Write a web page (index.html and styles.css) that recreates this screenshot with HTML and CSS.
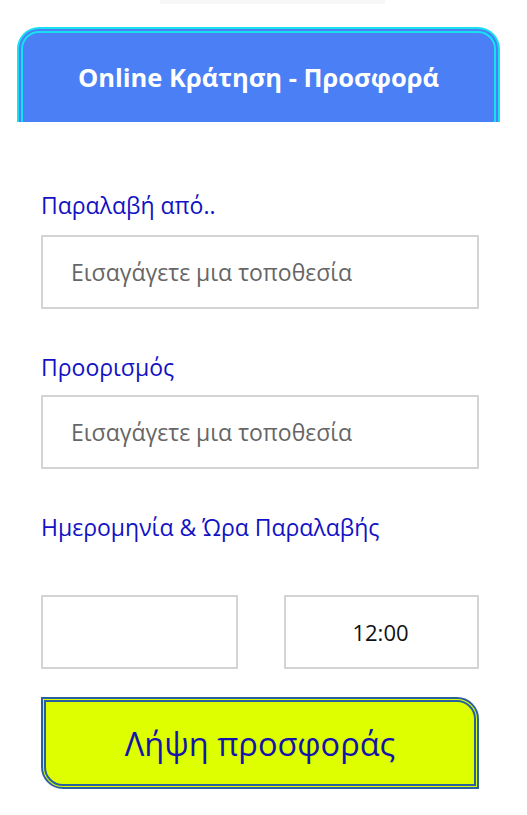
FILE: index.html
```html
<!DOCTYPE html>
<html lang="el">
<head>
<meta charset="utf-8">
<title>Online Κράτηση</title>
<link rel="stylesheet" href="styles.css">
</head>
<body>
<div class="topbar"></div>
<div class="widget">
  <div class="header">Online Κράτηση - Προσφορά</div>
  <form class="form">
    <label class="label">Παραλαβή από..</label>
    <div class="field"><span class="ph">Εισαγάγετε μια τοποθεσία</span></div>
    <label class="label l2">Προορισμός</label>
    <div class="field"><span class="ph">Εισαγάγετε μια τοποθεσία</span></div>
    <label class="label l3">Ημερομηνία &amp; Ώρα Παραλαβής</label>
    <div class="row">
      <div class="field small"></div>
      <div class="field small time">12:00</div>
    </div>
    <div class="btn">Λήψη προσφοράς</div>
  </form>
</div>
</body>
</html>
```
FILE: styles.css
```css
html, body {
  margin: 0;
  padding: 0;
  background: #ffffff;
}
body {
  width: 527px;
  height: 815px;
  overflow: hidden;
  font-family: "Open Sans", "Noto Sans", sans-serif;
}
.topbar {
  width: 225px;
  height: 4px;
  margin-left: 160px;
  background: #f7f7f7;
}
.widget {
  margin: 23px 0 0 17px;
  width: 483px;
}
.header {
  height: 95px;
  box-sizing: border-box;
  border: 6px double #18e0f0;
  border-bottom: none;
  border-radius: 22px 22px 0 0;
  background: #4a7ff5;
  color: #ffffff;
  font-family: "Open Sans", sans-serif;
  font-weight: 700;
  font-size: 25.5px;
  display: flex;
  align-items: center;
  justify-content: center;
  padding-bottom: 2px;
}
.form {
  padding: 68px 21px 0 24px;
  display: flex;
  flex-direction: column;
}
.label {
  display: block;
  color: #1212c4;
  font-size: 23px;
  line-height: 30px;
  height: 30px;
  margin-bottom: 15px;
}
.l2 { margin-top: 43px; margin-bottom: 13px; }
.l3 { margin-top: 43px; margin-bottom: 53px; }
.field {
  box-sizing: border-box;
  height: 74px;
  border: 2px solid #d4d4d4;
  background: #fff;
  display: flex;
  align-items: center;
  padding-left: 28px;
}
.ph {
  color: #666666;
  font-size: 23px;
}
.row {
  display: flex;
  justify-content: space-between;
}
.small {
  width: 197px;
  padding: 0;
}
.small.time {
  width: 195px;
  justify-content: center;
  color: #111;
  font-size: 22px;
  padding-right: 2px;
}
.btn {
  margin-top: 28px;
  height: 92px;
  box-sizing: border-box;
  border: 5px double #2a5fa0;
  border-radius: 0 22px 0 22px;
  background: #ddff00;
  color: #1414a8;
  font-size: 32.5px;
  display: flex;
  align-items: center;
  justify-content: center;
}
```
